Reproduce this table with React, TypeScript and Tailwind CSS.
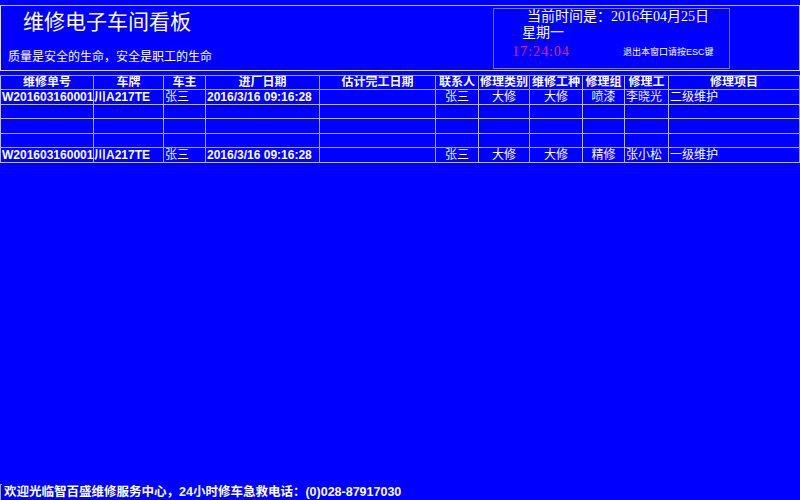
const sans = "font-['Liberation_Sans','Noto_Sans_CJK_SC',sans-serif]";
const serif = "font-['Liberation_Serif','Noto_Sans_CJK_SC',serif]";
const cols = "grid grid-cols-[93px_70px_42px_114px_116px_43px_51px_53px_42px_44px_132px]";

interface Job {
    no: string;
    plate: string;
    owner: string;
    inDate: string;
    estDate: string;
    contact: string;
    category: string;
    kind: string;
    group: string;
    worker: string;
    item: string;
}

const headers = ["维修单号", "车牌", "车主", "进厂日期", "估计完工日期", "联系人", "修理类别", "维修工种", "修理组", "修理工", "修理项目"];

const jobs: (Job | null)[] = [
    { no: "W201603160001", plate: "川A217TE", owner: "张三", inDate: "2016/3/16 09:16:28", estDate: "", contact: "张三", category: "大修", kind: "大修", group: "喷漆", worker: "李晓光", item: "二级维护" },
    null,
    null,
    null,
    { no: "W201603160001", plate: "川A217TE", owner: "张三", inDate: "2016/3/16 09:16:28", estDate: "", contact: "张三", category: "大修", kind: "大修", group: "精修", worker: "张小松", item: "一级维护" },
];

const rowHeights = ["h-[15px]", "h-[14px]", "h-[15px]", "h-[14px]", "h-[15px]"];

const Cell = ({ children, className = "", last = false }: { children?: React.ReactNode; className?: string; last?: boolean }) => (
    <div className={`flex items-center overflow-hidden whitespace-nowrap border-l border-[#b4b4ff] text-[12px] leading-[13px] ${last ? "border-r" : ""} ${className}`}>
        {children}
    </div>
);

const App = () => {
    return (
        <div className={`flex h-[500px] w-[800px] flex-col bg-[#0000ff] text-white ${sans}`}>
            {/* header */}
            <div className="mt-[5px] flex h-[66px] border border-[#d4d4ff]">
                <div className="flex flex-1 flex-col">
                    <div className="pl-[22px] pt-[4px] text-[21px] leading-[24px]">维修电子车间看板</div>
                    <div className="pl-[7px] pt-[16px] text-[12px] leading-[14px]">质量是安全的生命，安全是职工的生命</div>
                </div>
                <div className={`mr-[69px] mt-[2px] flex h-[61px] w-[237px] flex-col border border-[#7878e0] ${serif}`}>
                    <div className="pl-[33px] text-[14px] leading-[16px]">当前时间是：2016年04月25日</div>
                    <div className="pl-[28px] text-[14px] leading-[16px]">星期一</div>
                    <div className="flex items-center pt-[3px]">
                        <span className="w-[129px] pl-[18px] text-[14px] leading-[16px] tracking-[1px] text-[#e8206c]">17:24:04</span>
                        <span className={`${sans} text-[9px] leading-[12px]`}>退出本窗口请按ESC键</span>
                    </div>
                </div>
            </div>

            {/* table */}
            <div className="mt-[4px] border-b border-[#b4b4ff]">
                <div className={`${cols} h-[14px] border-t border-[#b4b4ff]`}>
                    {headers.map((h, i) => (
                        <Cell key={h} last={i === headers.length - 1} className="justify-center font-bold">
                            {h}
                        </Cell>
                    ))}
                </div>
                {jobs.map((job, r) => (
                    <div key={r} className={`${cols} ${rowHeights[r]} border-t border-[#b4b4ff]`}>
                        <Cell className="pl-[1px] font-bold">{job?.no}</Cell>
                        <Cell className="font-bold">{job?.plate}</Cell>
                        <Cell className="pl-[1px]">{job?.owner}</Cell>
                        <Cell className="pl-[1px] font-bold">{job?.inDate}</Cell>
                        <Cell>{job?.estDate}</Cell>
                        <Cell className="justify-center">{job?.contact}</Cell>
                        <Cell className="justify-center">{job?.category}</Cell>
                        <Cell className="justify-center">{job?.kind}</Cell>
                        <Cell className="justify-center">{job?.group}</Cell>
                        <Cell className="pl-[1px]">{job?.worker}</Cell>
                        <Cell last className="pl-[1px]">{job?.item}</Cell>
                    </div>
                ))}
            </div>

            <div className="flex-1" />

            {/* footer */}
            <div className="flex h-[16px] items-center">
                <div className="mr-[2px] h-[16px] w-[2px] border-l border-t border-[#9a9ad0]" />
                <span className="text-[12.5px] font-bold leading-[14px]">欢迎光临智百盛维修服务中心，24小时修车急救电话：(0)028-87917030</span>
            </div>
        </div>
    );
};

export default App;
